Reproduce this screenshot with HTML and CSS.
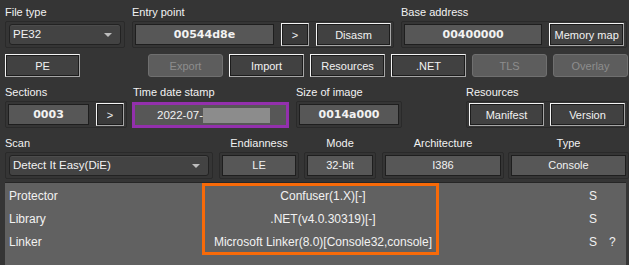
FILE: index.html
```html
<!DOCTYPE html>
<html lang="en">
<head>
  <meta charset="UTF-8">
  <meta name="viewport" content="width=device-width, initial-scale=1">
  <title>Detect It Easy</title>
  <link rel="stylesheet" href="styles.css">
</head>
<body>
  <div class="panel">
    <div class="row row-top">
      <div class="group g-type">
        <div class="cap">File type</div>
        <div class="frame"><div class="combo w-type">PE32<span class="arrow"></span></div></div>
      </div>
      <div class="group g-entry">
        <div class="cap">Entry point</div>
        <div class="frame">
          <div class="val bold w-addr">00544d8e</div>
          <button class="btn w-go">&gt;</button>
          <button class="btn w-std">Disasm</button>
        </div>
      </div>
      <div class="group g-base">
        <div class="cap">Base address</div>
        <div class="frame">
          <div class="val bold w-addr">00400000</div>
          <button class="btn w-std">Memory map</button>
        </div>
      </div>
    </div>

    <div class="row row-btns">
      <button class="btn w-std">PE</button>
      <div class="btn-set">
        <button class="btn w-std" disabled>Export</button>
        <button class="btn w-std">Import</button>
        <button class="btn w-std">Resources</button>
        <button class="btn w-std">.NET</button>
        <button class="btn w-std" disabled>TLS</button>
        <button class="btn w-std" disabled>Overlay</button>
      </div>
    </div>

    <div class="row row-mid">
      <div class="group g-sect">
        <div class="cap">Sections</div>
        <div class="frame">
          <div class="val bold w-sect">0003</div>
          <button class="btn w-go">&gt;</button>
        </div>
      </div>
      <div class="group g-time">
        <div class="cap">Time date stamp</div>
        <div class="mark">
          <div class="val stamp">2022-07-<span class="redact"></span></div>
        </div>
      </div>
      <div class="group g-size">
        <div class="cap">Size of image</div>
        <div class="frame"><div class="val bold w-size">0014a000</div></div>
      </div>
      <div class="group g-res">
        <div class="cap">Resources</div>
        <div class="frame">
          <button class="btn w-std">Manifest</button>
          <button class="btn w-std">Version</button>
        </div>
      </div>
    </div>

    <div class="row row-scan">
      <div class="group g-scan">
        <div class="cap">Scan</div>
        <div class="frame"><div class="combo w-scan">Detect It Easy(DiE)<span class="arrow"></span></div></div>
      </div>
      <div class="group center g-endian">
        <div class="cap">Endianness</div>
        <div class="frame"><div class="val w-le">LE</div></div>
      </div>
      <div class="group center g-mode">
        <div class="cap">Mode</div>
        <div class="frame"><div class="val w-mode">32-bit</div></div>
      </div>
      <div class="group center g-arch">
        <div class="cap">Architecture</div>
        <div class="frame"><div class="val w-arch">I386</div></div>
      </div>
      <div class="group center g-kind">
        <div class="cap">Type</div>
        <div class="frame"><div class="val w-kind">Console</div></div>
      </div>
    </div>

    <div class="results">
      <div class="res-row"><span>Protector</span><span class="res-val">Confuser(1.X)[-]</span><span></span><span>S</span><span></span></div>
      <div class="res-row"><span>Library</span><span class="res-val">.NET(v4.0.30319)[-]</span><span></span><span>S</span><span></span></div>
      <div class="res-row"><span>Linker</span><span class="res-val">Microsoft Linker(8.0)[Console32,console]</span><span></span><span>S</span><span>?</span></div>
      <div class="highlight"></div>
    </div>
  </div>
</body>
</html>
```

FILE: styles.css
```css
*, *::before, *::after { box-sizing: border-box; }
html, body { margin: 0; padding: 0; background: #353535; }
body { font-family: "Liberation Sans", Arial, sans-serif; font-size: 11px; color: #f2f2f2; width: 629px; height: 265px; overflow: hidden; }

.panel { padding: 4px 0 0 5px; }
.row { display: flex; align-items: flex-start; }
.group { display: flex; flex-direction: column; }
.group.center { align-items: center; }
.cap { height: 17px; line-height: 16px; white-space: nowrap; }

.frame { display: flex; align-items: center; gap: 7px; height: 27px; padding: 0 2px; border: 1px solid #2a2a2a; border-radius: 2px; }
.group.center .frame { align-self: stretch; }

.combo { position: relative; height: 21px; line-height: 19px; padding-left: 3px; background: #434343; border: 1px solid #222; border-radius: 3px; box-shadow: inset 0 1px 0 #4c4c4c; font-size: 11.5px; }
.arrow { position: absolute; right: 8px; top: 8px; width: 0; height: 0; border-left: 4px solid transparent; border-right: 4px solid transparent; border-top: 4px solid #bdbdbd; }

.val { height: 21px; line-height: 19px; text-align: center; background: #575757; border: 1px solid #1e1e1e; white-space: nowrap; }
.val.bold { font-family: "DejaVu Sans", Verdana, sans-serif; font-weight: bold; font-size: 11px; }

.btn { height: 23px; padding: 0; font-family: inherit; font-size: 11px; color: #f2f2f2; background: #414141; border: 1px solid; border-color: #f4f4f4 #a6a6a6 #a6a6a6 #f4f4f4; box-shadow: inset 1px 1px 0 #1c1c1c, inset -1px -1px 0 #1c1c1c; }
.btn:disabled { background: #5d5d5d; color: #8d8d8d; border-color: #6f6f6f; border-radius: 3px; box-shadow: none; }

.w-type { width: 112px; margin-left: 1px; }
.w-addr { width: 139px; }
.w-go { width: 28px; background: #3a3a3a; }
.w-std { width: 75px; }
.w-sect { width: 81px; }
.w-size { width: 100px; }
.w-scan { width: 200px; margin-left: 1px; }
.w-le { width: 74px; }
.w-mode { width: 66px; }
.w-arch { width: 116px; }
.w-kind { width: 115px; }

.g-type { width: 120px; }
.g-entry { margin-left: 7px; }
.g-entry .frame { width: 262px; }
.g-base { margin-left: 7px; }
.g-base .frame { width: 226px; }

.row-btns { margin-top: 6px; }
.btn-set { display: flex; gap: 6px; margin-left: 68px; }

.row-mid { margin-top: 7px; }
.g-sect .frame { width: 122px; }
.g-time { margin-left: 5px; }
.g-time .cap { padding-left: 1px; }
.mark { height: 26px; width: 157px; border: 3px solid #9330ad; margin-top: 1px; }
.stamp { height: 20px; line-height: 18px; border: none; text-align: left; padding-left: 22px; font-size: 11.5px; display: flex; align-items: center; }
.redact { display: inline-block; width: 67px; height: 15px; background: #8c8c8c; }
.g-size { margin-left: 7px; }
.g-size .frame { width: 106px; }
.g-res { margin-left: 64px; }
.g-res .frame { width: 162px; gap: 6px; }

.row-scan { margin-top: 7px; }
.g-scan .frame { width: 208px; }
.g-endian { margin-left: 6px; width: 80px; }
.g-mode { margin-left: 5px; width: 72px; }
.g-arch { margin-left: 6px; width: 122px; }
.g-kind { margin-left: 4px; width: 121px; }

.results { position: relative; margin-top: 3px; width: 621px; height: 90px; padding-top: 2px; background: #616161; border-top: 1px solid #262626; font-size: 12px; }
.res-row { display: grid; grid-template-columns: 198px 240px 146px 20px 1fr; height: 23px; line-height: 23px; white-space: nowrap; }
.res-row span:first-child { padding-left: 4px; }
.res-val { text-align: center; }
.highlight { position: absolute; left: 197px; top: 0; width: 237px; height: 72px; border: 3px solid #f86a08; }
```
